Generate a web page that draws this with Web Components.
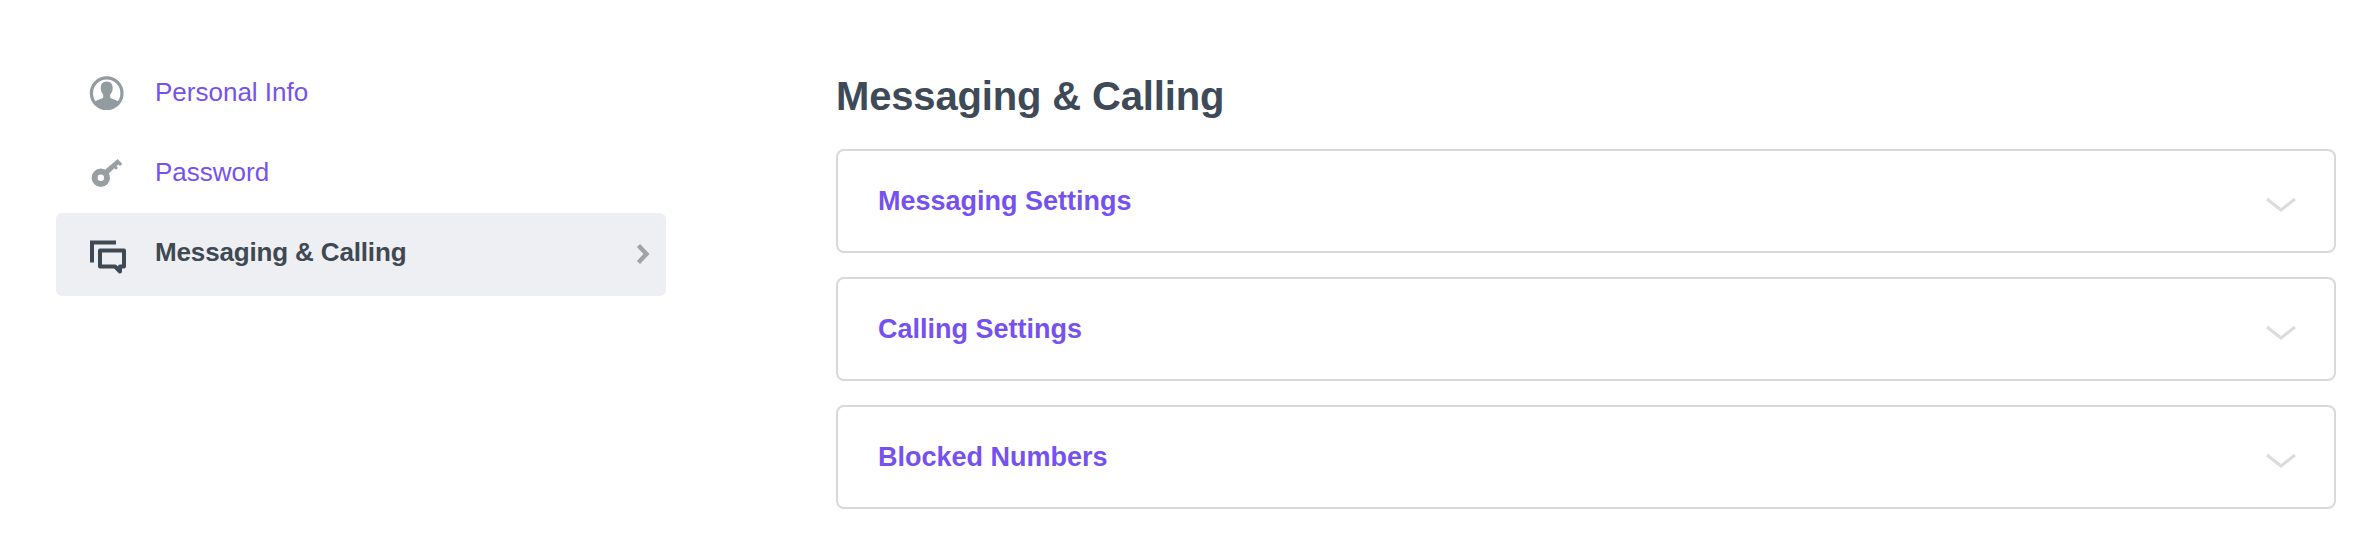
<!doctype html>
<html><head><meta charset="utf-8"><title>Settings</title>
<style>html,body{margin:0;background:#fff;font-family:"Liberation Sans",Arial,sans-serif}</style></head>
<body>
<settings-page>
  <side-nav slot="nav">
    <nav-item label="Personal Info" icon="person"></nav-item>
    <nav-item label="Password" icon="key"></nav-item>
    <nav-item label="Messaging &amp; Calling" icon="chat" active></nav-item>
  </side-nav>
  <settings-panel slot="main" heading="Messaging &amp; Calling">
    <accordion-card label="Messaging Settings"></accordion-card>
    <accordion-card label="Calling Settings"></accordion-card>
    <accordion-card label="Blocked Numbers"></accordion-card>
  </settings-panel>
</settings-page>
<script>
const ICONS={
 person:`<svg width="36" height="36" viewBox="0 0 36 36" style="overflow:visible"><defs><clipPath id="c"><circle cx="18.700" cy="19.200" r="15"/></clipPath></defs><circle cx="18.700" cy="19.200" r="15.300" fill="none" stroke="#929ba0" stroke-width="3.200"/><g clip-path="url(#c)" fill="#929ba0"><path d="M18.700 7.500c-3.900 0-6 2.800-6 6.500 0 2.700 1 4.900 2.500 6.400v2.300c0 1-.6 1.500-1.600 1.900-3.300 1.200-6.300 2.300-7.400 4.400V37h25V29c-1.100-2.100-4.100-3.200-7.400-4.400-1-.4-1.600-.9-1.600-1.900v-2.300c1.500-1.500 2.500-3.700 2.500-6.400C24.700 10.300 22.600 7.500 18.700 7.500z"/></g></svg>`,
 key:`<svg width="36" height="36" viewBox="0 0 36 36" style="overflow:visible"><circle cx="12.800" cy="23.800" r="6.200" fill="none" stroke="#989fa3" stroke-width="6"/><path d="M15 17.500 29.700 5 34.300 10 32 12 30.500 10.500 28.500 12.300 30 14 27.800 15.800 26.300 14.200 18.800 21.500Z" fill="#989fa3"/></svg>`,
 chat:`<svg width="36" height="36" viewBox="0 0 36 36" style="overflow:visible"><g fill="none" stroke="#3e4954" stroke-width="4"><path d="M4 27.500V7.500H28"/><path d="M12 15.500H36V31.500H32V36.500L27 31.500H12Z" stroke-linejoin="round"/></g></svg>`
};
function def(name,css,html){customElements.define(name,class extends HTMLElement{
  connectedCallback(){if(this.shadowRoot)return;const r=this.attachShadow({mode:'open'});
    r.innerHTML=`<style>${css}</style>${html(this)}`;}
});}
const esc=s=>(s||'').replace(/&/g,'&amp;').replace(/</g,'&lt;');
def('settings-page',`:host{display:grid;grid-template-columns:610px 1500px;column-gap:170px;padding:52px 0 0 56px;box-sizing:border-box;width:2367px;height:547px}`,
  ()=>`<slot name="nav"></slot><slot name="main"></slot>`);
def('side-nav',`:host{display:flex;flex-direction:column;align-items:stretch}`,()=>`<slot></slot>`);
def('nav-item',`:host{display:flex;align-items:center;height:80px;box-sizing:border-box;padding:0 16px 0 32px;font-size:26px;color:#7552f0;border-radius:6px}
  :host([active]){height:83px;margin-top:1px;padding-bottom:4px;background:#eeeff3;color:#3e4954;font-weight:700;letter-spacing:-.15px}
  .i{width:36px;height:36px;flex:none;margin-right:31px;display:block}
  .i svg{display:block}
  .t{flex:1}
  .c{flex:none;display:block;margin-top:2px}`,
  e=>`<span class="i">${ICONS[e.getAttribute('icon')]}</span><span class="t">${esc(e.getAttribute('label'))}</span>${e.hasAttribute('active')?`<svg class="c" width="14" height="22" viewBox="0 0 14 22"><path d="M2.500 2.500 10.500 11 2.500 19.500" fill="none" stroke="#9fa3a6" stroke-width="4.400"/></svg>`:''}`);
def('settings-panel',`:host{display:flex;flex-direction:column;padding-top:21px}
  h2{margin:0 0 30px;font-size:40px;line-height:46px;font-weight:700;color:#3e4a57;letter-spacing:-.15px}
  .l{display:flex;flex-direction:column;gap:24px}`,
  e=>`<h2>${esc(e.getAttribute('heading'))}</h2><div class="l"><slot></slot></div>`);
def('accordion-card',`:host{display:flex;align-items:center;height:104px;box-sizing:border-box;border:2px solid #d9d9d9;border-radius:8px;padding:0 38px 0 40px;font-size:27px;font-weight:700;color:#7552f0}
  .t{flex:1}
  svg{display:block;filter:blur(.5px);margin-top:8px}`,
  e=>`<span class="t">${esc(e.getAttribute('label'))}</span><svg width="30" height="16" viewBox="0 0 30 16"><path d="M1 2 15 13 29 2" fill="none" stroke="#dcdcdc" stroke-width="3"/></svg>`);
</script>
</body></html>
